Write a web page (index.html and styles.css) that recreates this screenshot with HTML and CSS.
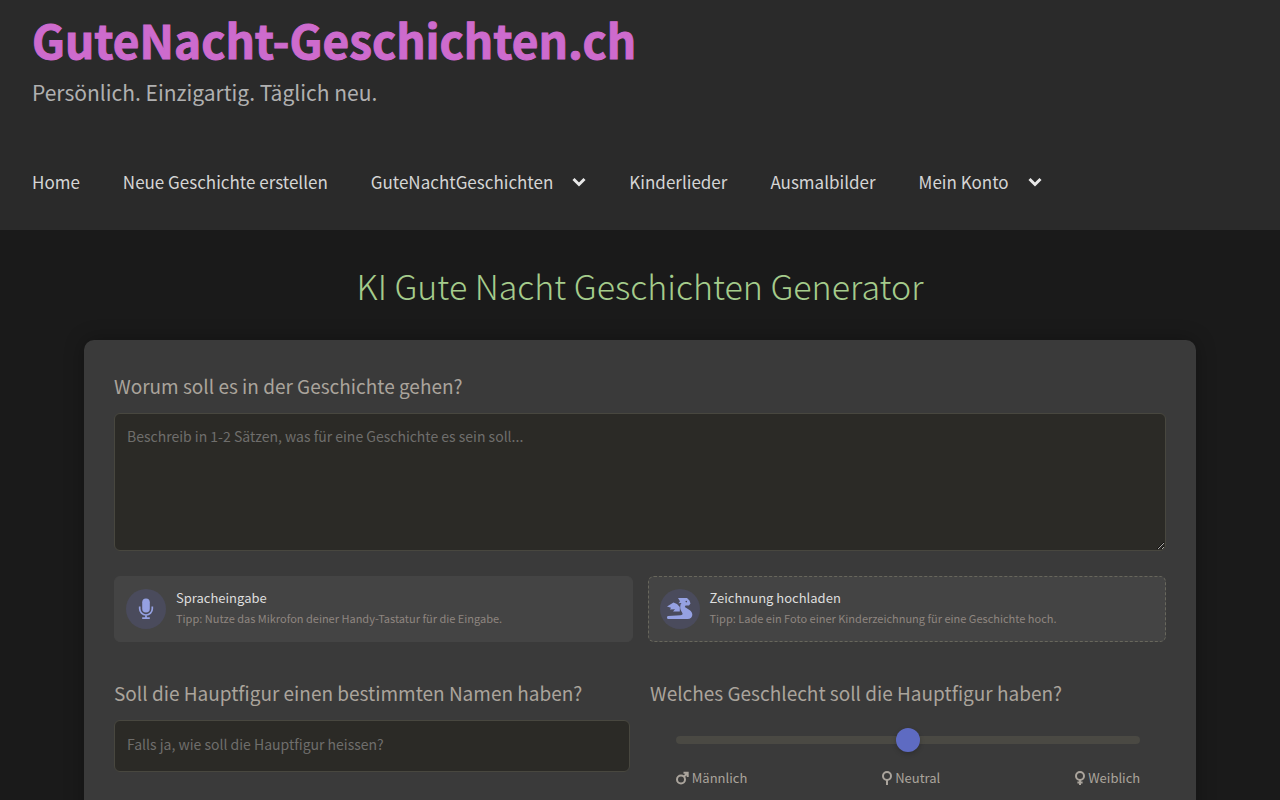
FILE: index.html
```html
<!DOCTYPE html>
<html lang="de">
<head>
    <meta charset="UTF-8">
    <meta name="viewport" content="width=device-width, initial-scale=1.0">
    <title>GuteNacht-Geschichten.ch</title>
    <link rel="stylesheet" href="styles.css">
</head>
<body>
    <header class="site-header">
        <a href="#" class="logo">GuteNacht-Geschichten.ch</a>
        <p class="tagline">Persönlich. Einzigartig. Täglich neu.</p>
        <nav class="main-nav">
            <a href="#">Home</a>
            <a href="#">Neue Geschichte erstellen</a>
            <a href="#">GuteNachtGeschichten
                <svg class="chevron" viewBox="0 0 14 10"><path d="M1.5 2 L7 7.5 L12.5 2"/></svg>
            </a>
            <a href="#">Kinderlieder</a>
            <a href="#">Ausmalbilder</a>
            <a href="#">Mein Konto
                <svg class="chevron" viewBox="0 0 14 10"><path d="M1.5 2 L7 7.5 L12.5 2"/></svg>
            </a>
        </nav>
    </header>

    <main class="container">
        <h1>KI Gute Nacht Geschichten Generator</h1>
        <form class="story-form">
            <label class="question" for="story-topic">Worum soll es in der Geschichte gehen?</label>
            <textarea class="field" id="story-topic" name="story_topic" placeholder="Beschreib in 1-2 Sätzen, was für eine Geschichte es sein soll..."></textarea>

            <div class="input-options">
                <button type="button" class="option">
                    <span class="option-icon">
                        <svg viewBox="0 0 24 24" width="24" height="24">
                            <rect x="8.2" y="1.5" width="7.6" height="14" rx="3.8"/>
                            <path class="line" d="M5.7 9.5v2.2a6.3 6.3 0 0 0 12.6 0V9.5M12 18v3.2M8.2 21.2h7.6"/>
                        </svg>
                    </span>
                    <span class="option-text">
                        <span class="option-title">Spracheingabe</span>
                        <span class="option-tip">Tipp: Nutze das Mikrofon deiner Handy-Tastatur für die Eingabe.</span>
                    </span>
                </button>
                <button type="button" class="option upload">
                    <span class="option-icon">
                        <svg viewBox="0 0 26 22" width="26" height="22">
                            <path d="M11 0H20L22.5 2.5 23.5 5.5 22 7.5H18.5L17.8 9 22.5 12C27 15 26 21 20.5 21H1C-.3 21-.3 18.2 1 18.1L13.5 17.2C16 17 16 15.5 14.8 14 13 11.5 13 9.5 13.5 6.5L14.5 5 11.5 5.3 13 3.2z"/>
                            <path d="M0 8.5 6.5 4.4 10 6 12.8 9V13.5H6L8 11.2 3 11.4 4 9.8z"/>
                            <circle class="eye" cx="19.3" cy="3.6" r=".8"/>
                        </svg>
                    </span>
                    <span class="option-text">
                        <span class="option-title">Zeichnung hochladen</span>
                        <span class="option-tip">Tipp: Lade ein Foto einer Kinderzeichnung für eine Geschichte hoch.</span>
                    </span>
                </button>
            </div>

            <div class="form-row">
                <div>
                    <label class="question" for="hero-name">Soll die Hauptfigur einen bestimmten Namen haben?</label>
                    <input class="field" type="text" id="hero-name" name="hero_name" placeholder="Falls ja, wie soll die Hauptfigur heissen?">
                </div>
                <div>
                    <label class="question" for="hero-gender">Welches Geschlecht soll die Hauptfigur haben?</label>
                    <div class="gender">
                        <input class="slider" type="range" id="hero-gender" name="hero_gender" min="0" max="2" value="1">
                        <div class="gender-labels">
                            <span>
                                <svg viewBox="0 0 13 14" width="13" height="14"><circle cx="5" cy="8.5" r="4"/><path d="M7.8 5.7 11 2.5M7.5 1.8h4.2V6"/></svg>
                                Männlich
                            </span>
                            <span>
                                <svg viewBox="0 0 10 14" width="10" height="14"><circle cx="5" cy="5" r="4"/><path d="M5 9V14"/></svg>
                                Neutral
                            </span>
                            <span>
                                <svg viewBox="0 0 10 14" width="10" height="14"><circle cx="5" cy="5" r="4"/><path d="M5 9V14M2.4 11.6h5.2"/></svg>
                                Weiblich
                            </span>
                        </div>
                    </div>
                </div>
            </div>
        </form>
    </main>
</body>
</html>
```
FILE: styles.css
```css
* {
    box-sizing: border-box;
}

body {
    margin: 0;
    background-color: #1a1a1a;
    color: #d5d5d5;
    font-family: "Noto Sans CJK SC", "Noto Sans", sans-serif;
}

.site-header {
    padding: 14px 32px 0;
    background-color: #2a2a2a;
}

.logo {
    display: block;
    color: #cd6bcd;
    font-size: 46px;
    font-weight: 700;
    line-height: 50px;
    text-decoration: none;
    -webkit-text-stroke: 1px #cd6bcd;
}

.tagline {
    margin: 12px 0 0;
    color: #b0b0b0;
    font-size: 21px;
    line-height: 32px;
}

.main-nav {
    display: flex;
    flex-wrap: wrap;
    gap: 0 43px;
    padding: 50px 0 24px;
}

.main-nav a {
    display: flex;
    align-items: center;
    gap: 19px;
    color: #d5d5d5;
    font-size: 17px;
    line-height: 48px;
    text-decoration: none;
}

.chevron {
    width: 14px;
    height: 10px;
    fill: none;
    stroke: #e8e8e8;
    stroke-width: 3;
}

.container {
    max-width: 1112px;
    margin: 0 auto;
}

h1 {
    margin: 0;
    padding: 28px 0 26px;
    color: #a5cc8c;
    font-size: 34px;
    font-weight: 200;
    line-height: 56px;
    text-align: center;
}

.story-form {
    padding: 30px;
    background-color: #3a3a3a;
    border-radius: 10px;
    box-shadow: 0 0 20px rgba(0, 0, 0, 0.3);
}

.question {
    display: block;
    margin-bottom: 12px;
    color: #aaa49c;
    font-size: 19px;
    line-height: 31px;
}

.field {
    display: block;
    width: 100%;
    height: 52px;
    padding: 11px 12px 15px;
    background-color: #2b2a26;
    border: 1px solid #48473f;
    border-radius: 6px;
    color: #d5d5d5;
    font-family: inherit;
    font-size: 14px;
    line-height: 22px;
}

.field::placeholder {
    color: #6f6e6c;
}

textarea.field {
    height: 138px;
    resize: vertical;
}

.input-options {
    display: grid;
    grid-template-columns: 1fr 1fr;
    gap: 15px;
    margin: 25px 0 35px;
}

.option {
    display: flex;
    align-items: center;
    gap: 10px;
    padding: 10px 11px;
    background-color: #444;
    border: 1px solid #444;
    border-radius: 6px;
    font-family: inherit;
    text-align: left;
    cursor: pointer;
}

.upload {
    border: 1px dashed #68675c;
}

.option-icon {
    display: flex;
    flex: none;
    align-items: center;
    justify-content: center;
    width: 40px;
    height: 40px;
    background-color: #4a4b5c;
    border-radius: 50%;
    fill: #95a1e2;
}

.option-icon .line {
    fill: none;
    stroke: #95a1e2;
    stroke-width: 1.7;
}

.option-icon .eye {
    fill: #4a4b5c;
}

.option-text {
    padding-bottom: 4px;
}

.option-title,
.option-tip {
    display: block;
    color: #dedede;
    font-size: 13px;
    line-height: 22px;
}

.option-tip {
    color: #8f8680;
    font-size: 11px;
    line-height: 18px;
}

.form-row {
    display: grid;
    grid-template-columns: 1fr 1fr;
    gap: 20px;
    padding-bottom: 40px;
}

.gender {
    padding: 8px 5% 0;
}

.slider {
    display: block;
    width: 100%;
    height: 24px;
    margin: 0;
    background: none;
    appearance: none;
}

.slider::-webkit-slider-runnable-track {
    height: 8px;
    background-color: #4a4943;
    border-radius: 4px;
}

.slider::-webkit-slider-thumb {
    width: 24px;
    height: 24px;
    margin-top: -8px;
    background-color: #5e6bc2;
    border-radius: 50%;
    box-shadow: 0 2px 5px rgba(0, 0, 0, 0.2);
    appearance: none;
}

.gender-labels {
    display: flex;
    justify-content: space-between;
    margin-top: 16px;
    color: #aaa49c;
    font-size: 13px;
    line-height: 20px;
}

.gender-labels span {
    display: flex;
    align-items: center;
    gap: 3px;
}

.gender-labels svg {
    flex: none;
    fill: none;
    stroke: #aaa49c;
    stroke-width: 2;
}
```
